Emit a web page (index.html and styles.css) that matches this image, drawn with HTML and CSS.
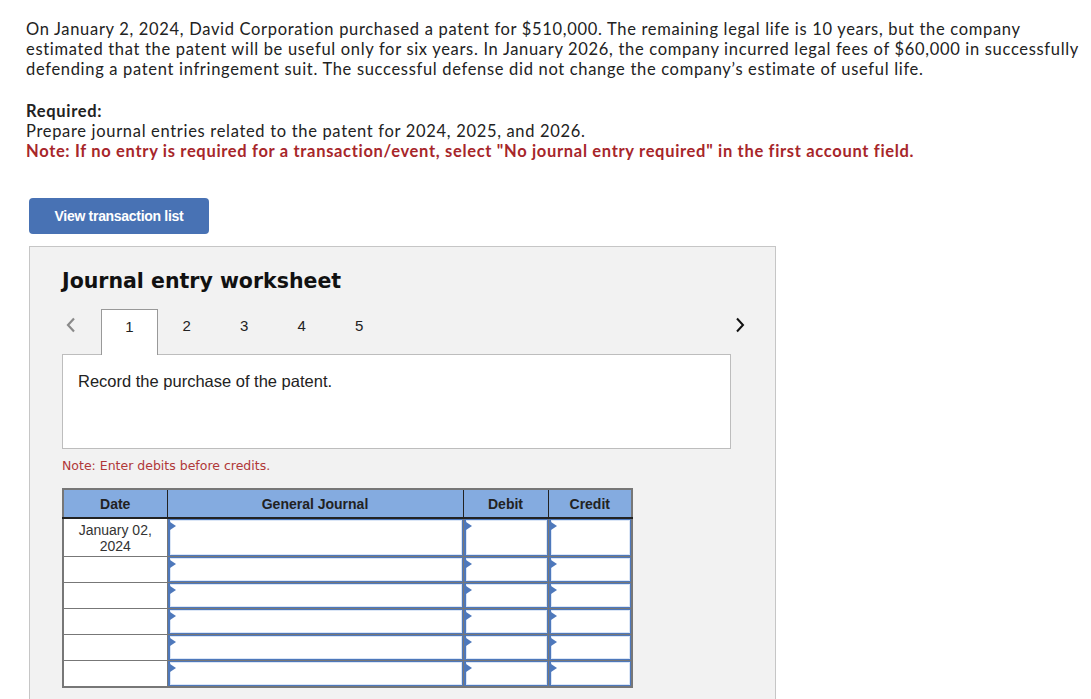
FILE: index.html
```html
<!DOCTYPE html>
<html lang="en">
<head>
<meta charset="utf-8">
<title>Journal entry worksheet</title>
<link rel="stylesheet" href="styles.css">
</head>
<body>
<div class="problem">
  <p class="intro">On January 2, 2024, David Corporation purchased a patent for $510,000. The remaining legal life is 10 years, but the company estimated that the patent will be useful only for six years. In January 2026, the company incurred legal fees of $60,000 in successfully defending a patent infringement suit. The successful defense did not change the company’s estimate of useful life.</p>
  <p class="req"><strong>Required:</strong><br>Prepare journal entries related to the patent for 2024, 2025, and 2026.<br><strong class="warn">Note: If no entry is required for a transaction/event, select "No journal entry required" in the first account field.</strong></p>
</div>
<div class="workspace">
  <button class="btn-list" type="button">View transaction list</button>
  <section class="panel">
    <h2 class="panel-title">Journal entry worksheet</h2>
    <div class="tabs">
      <span class="arrow prev"><svg width="10" height="16" viewBox="0 0 10 16"><path d="M8 1.5 L2 8 L8 14.5" fill="none" stroke="#8a8a8a" stroke-width="2.2"/></svg></span>
      <span class="tab active">1</span>
      <span class="tab">2</span>
      <span class="tab">3</span>
      <span class="tab">4</span>
      <span class="tab">5</span>
      <span class="spacer"></span>
      <span class="arrow next"><svg width="10" height="16" viewBox="0 0 10 16"><path d="M2 1.5 L8 8 L2 14.5" fill="none" stroke="#111" stroke-width="2"/></svg></span>
    </div>
    <div class="task">Record the purchase of the patent.</div>
    <p class="hint">Note: Enter debits before credits.</p>
    <table class="journal">
      <colgroup><col class="c-date"><col class="c-gj"><col class="c-dr"><col class="c-cr"></colgroup>
      <thead>
        <tr><th>Date</th><th>General Journal</th><th>Debit</th><th>Credit</th></tr>
      </thead>
      <tbody>
        <tr class="first"><td class="date">January 02,<br>2024</td><td class="in"><div class="field"></div></td><td class="in"><div class="field"></div></td><td class="in"><div class="field"></div></td></tr>
        <tr><td class="date"></td><td class="in"><div class="field"></div></td><td class="in"><div class="field"></div></td><td class="in"><div class="field"></div></td></tr>
        <tr><td class="date"></td><td class="in"><div class="field"></div></td><td class="in"><div class="field"></div></td><td class="in"><div class="field"></div></td></tr>
        <tr><td class="date"></td><td class="in"><div class="field"></div></td><td class="in"><div class="field"></div></td><td class="in"><div class="field"></div></td></tr>
        <tr><td class="date"></td><td class="in"><div class="field"></div></td><td class="in"><div class="field"></div></td><td class="in"><div class="field"></div></td></tr>
        <tr><td class="date"></td><td class="in"><div class="field"></div></td><td class="in"><div class="field"></div></td><td class="in"><div class="field"></div></td></tr>
      </tbody>
    </table>
  </section>
</div>
</body>
</html>
```
FILE: styles.css
```css
html, body {
  margin: 0;
  padding: 0;
  background: #fff;
}
body {
  font-family: "Lato", "Open Sans", sans-serif;
  color: #222;
}
.problem {
  padding: 19px 6px 0 26px;
  font-size: 16.5px;
  letter-spacing: 0.68px;
  line-height: 20px;
}
.problem p {
  margin: 0;
}
.intro {
  margin-bottom: 22px !important;
}
.req strong {
  font-weight: 700;
}
.warn {
  color: #a7262a;
}
.workspace {
  padding: 37px 0 0 29px;
}
.btn-list {
  display: block;
  width: 180px;
  height: 36px;
  border: 0;
  border-radius: 4px;
  background: #4872b4;
  color: #fff;
  font-family: "Liberation Sans", Arial, sans-serif;
  font-weight: 700;
  font-size: 14px;
  letter-spacing: -0.3px;
  padding: 0;
}
.panel {
  margin-top: 12px;
  width: 747px;
  box-sizing: border-box;
  border: 1px solid #c6c6c6;
  background: #f2f2f2;
  padding: 0 44px 40px 32px;
}
.panel-title {
  margin: 0;
  padding-top: 22px;
  font-family: "DejaVu Sans", Verdana, sans-serif;
  font-weight: 700;
  font-size: 20.5px;
  line-height: 24px;
  color: #111;
}
.tabs {
  display: flex;
  align-items: stretch;
  margin-top: 16px;
  margin-right: -14px;
  height: 45px;
}
.arrow {
  display: flex;
  align-items: center;
  height: 32px;
}
.prev {
  width: 39px;
  padding-left: 4px;
  box-sizing: border-box;
}
.tab {
  width: 57.5px;
  height: 32px;
  display: flex;
  align-items: center;
  justify-content: center;
  font-family: "Liberation Sans", Arial, sans-serif;
  font-size: 15px;
  color: #222;
  box-sizing: border-box;
}
.tab.active {
  width: 57px;
  height: 46px;
  background: #fff;
  border: 1px solid #999;
  border-bottom: 0;
  align-items: flex-start;
  padding-top: 8px;
  position: relative;
  z-index: 1;
}
.spacer {
  flex: 1;
}
.task {
  height: 95px;
  box-sizing: border-box;
  background: #fff;
  border: 1px solid #bdbdbd;
  padding: 17px 15px 0;
  font-family: "Liberation Sans", Arial, sans-serif;
  font-size: 16.5px;
  line-height: 18px;
  color: #222;
}
.hint {
  margin: 9px 0 0;
  font-family: "DejaVu Sans", Verdana, sans-serif;
  font-size: 12.5px;
  line-height: 16px;
  color: #b03838;
}
.journal {
  margin-top: 14px;
  border-collapse: collapse;
  width: 569px;
  table-layout: fixed;
  font-family: "Liberation Sans", Arial, sans-serif;
  border: 2px solid #777;
  background: #fff;
}
.c-date { width: 104px; }
.c-gj { width: 296px; }
.c-dr { width: 85px; }
.c-cr { width: 84px; }
.journal th {
  height: 27px;
  padding: 0;
  background: #84abe0;
  font-size: 14px;
  font-weight: 700;
  color: #222;
  border-left: 1px solid #222;
  border-right: 1px solid #222;
  border-bottom: 2px solid #222;
  border-top: 2px solid #777;
}
.journal th:first-child { border-left: 2px solid #777; }
.journal th:last-child { border-right: 2px solid #777; }
.journal td {
  border: 1px solid #777;
  padding: 0;
  height: 25px;
  vertical-align: top;
  background: #fff;
}
.journal tr.first td {
  height: 37px;
}
.journal td.date {
  text-align: center;
  font-size: 14px;
  line-height: 16px;
  color: #333;
  padding-top: 3px;
  height: 22px;
}
.journal tr.first td.date {
  height: 34px;
}
.field {
  position: relative;
  height: 100%;
  min-height: 24px;
  box-sizing: border-box;
  border: 1px solid #4e78bb;
  border-left-width: 2px;
  background: #fff;
  box-shadow: inset 0 0 0 1px #dbe6f6;
}
.journal tr.first .field {
  min-height: 37px;
}
.field::before {
  content: "";
  position: absolute;
  left: 0;
  top: 2px;
  border-left: 6px solid #4e78bb;
  border-top: 4px solid transparent;
  border-bottom: 4px solid transparent;
}
```
